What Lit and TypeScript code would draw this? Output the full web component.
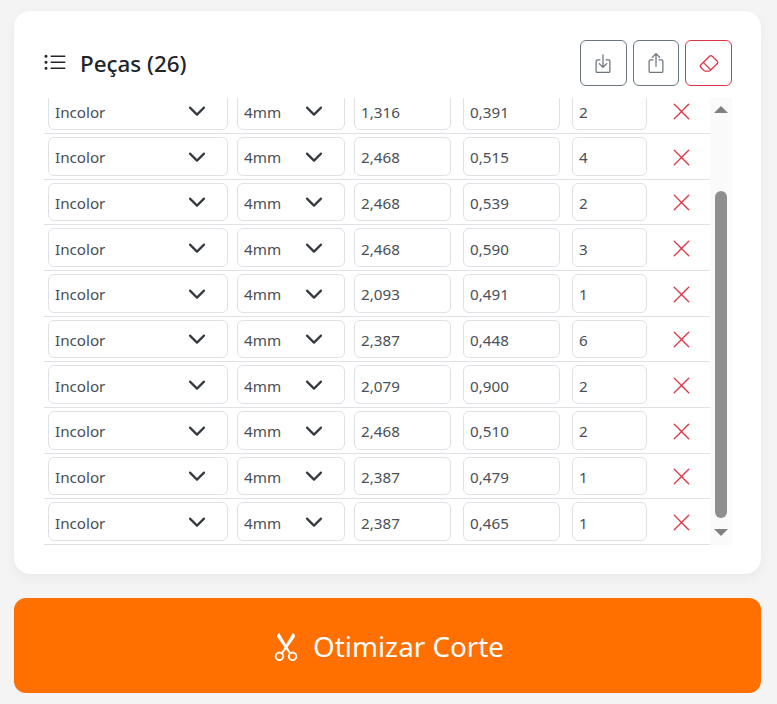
import { LitElement, html, css, svg } from "lit";
import { customElement } from "lit/decorators.js";

const rows = [
  ["1,316", "0,391", "2"],
  ["2,468", "0,515", "4"],
  ["2,468", "0,539", "2"],
  ["2,468", "0,590", "3"],
  ["2,093", "0,491", "1"],
  ["2,387", "0,448", "6"],
  ["2,079", "0,900", "2"],
  ["2,468", "0,510", "2"],
  ["2,387", "0,479", "1"],
  ["2,387", "0,465", "1"],
];

const icon = (cls: string, d: string) => html`<svg class=${cls} viewBox="0 0 16 16" fill="currentColor" aria-hidden="true">${svg`<path fill-rule="evenodd" d=${d}></path>`}</svg>`;

const BOX = "M3.5 6a.5.5 0 0 0-.5.5v8a.5.5 0 0 0 .5.5h9a.5.5 0 0 0 .5-.5v-8a.5.5 0 0 0-.5-.5h-2a.5.5 0 0 1 0-1h2A1.5 1.5 0 0 1 14 6.5v8a1.5 1.5 0 0 1-1.5 1.5h-9A1.5 1.5 0 0 1 2 14.5v-8A1.5 1.5 0 0 1 3.5 5h2a.5.5 0 0 1 0 1h-2z";
const LIST = "M5 11.5a.5.5 0 0 1 .5-.5h9a.5.5 0 0 1 0 1h-9a.5.5 0 0 1-.5-.5zm0-4a.5.5 0 0 1 .5-.5h9a.5.5 0 0 1 0 1h-9a.5.5 0 0 1-.5-.5zm0-4a.5.5 0 0 1 .5-.5h9a.5.5 0 0 1 0 1h-9a.5.5 0 0 1-.5-.5zm-3 1a1 1 0 1 0 0-2 1 1 0 0 0 0 2zm0 4a1 1 0 1 0 0-2 1 1 0 0 0 0 2zm0 4a1 1 0 1 0 0-2 1 1 0 0 0 0 2z";
const IN = BOX + "M7.646 11.854a.5.5 0 0 0 .708 0l3-3a.5.5 0 0 0-.708-.708L8.5 10.293V1.5a.5.5 0 0 0-1 0v8.793L5.354 8.146a.5.5 0 1 0-.708.708l3 3z";
const UP = BOX + "M7.646.146a.5.5 0 0 1 .708 0l3 3a.5.5 0 0 1-.708.708L8.5 1.707V10.5a.5.5 0 0 1-1 0V1.707L5.354 3.854a.5.5 0 1 1-.708-.708l3-3z";
const ERASER = "M8.086 2.207a2 2 0 0 1 2.828 0l3.879 3.879a2 2 0 0 1 0 2.828l-5.5 5.5A2 2 0 0 1 7.879 15H5.12a2 2 0 0 1-1.414-.586l-2.5-2.5a2 2 0 0 1 0-2.828l6.879-6.879zm2.121.707a1 1 0 0 0-1.414 0L4.16 7.547l5.293 5.293 4.633-4.633a1 1 0 0 0 0-1.414l-3.879-3.879zM8.746 13.547 3.453 8.254 1.914 9.793a1 1 0 0 0 0 1.414l2.5 2.5a1 1 0 0 0 .707.293H7.88a1 1 0 0 0 .707-.293l.16-.16z";
const X = "M2.146 2.854a.5.5 0 1 1 .708-.708L8 7.293l5.146-5.147a.5.5 0 0 1 .708.708L8.707 8l5.147 5.146a.5.5 0 0 1-.708.708L8 8.707l-5.146 5.147a.5.5 0 0 1-.708-.708L7.293 8 2.146 2.854Z";
const SCISSORS = "M3.5 3.5c-.614-.884-.074-1.962.858-2.5L8 7.226 11.642 1c.932.538 1.472 1.616.858 2.5L8.81 8.61l1.556 2.661a2.5 2.5 0 1 1-.794.637L8 9.73l-1.572 2.177a2.5 2.5 0 1 1-.794-.637L7.19 8.61 3.5 3.5zm2.5 10a1.5 1.5 0 1 0-3 0 1.5 1.5 0 0 0 3 0zm7 0a1.5 1.5 0 1 0-3 0 1.5 1.5 0 0 0 3 0z";

const chevron = html`<svg class="chev" viewBox="0 0 18 11" fill="none" stroke="#343a40" stroke-width="2.2" stroke-linecap="round" stroke-linejoin="round" aria-hidden="true"><path d="M2 1.6l7 7 7-7"></path></svg>`;

@customElement("app-root")
export class AppRoot extends LitElement {
  static styles = css`
    :host {
      display: block;
      box-sizing: border-box;
      min-height: 704px;
      padding: 11px 16px 11px 14px;
      background: #f4f4f4;
      font-family: "Noto Sans", "Open Sans", sans-serif;
      color: #212529;
    }
    .card {
      background: #fff;
      border-radius: 16px;
      padding: 29px 29px 29px 30px;
      box-shadow: 0 4px 12px rgba(0, 0, 0, 0.05);
    }
    .head {
      display: flex;
      align-items: center;
      justify-content: space-between;
      height: 46px;
      margin-bottom: 12px;
    }
    .title {
      display: flex;
      align-items: center;
      gap: 13px;
    }
    .i-list {
      width: 24px;
      height: 24px;
      margin-left: -1px;
    }
    h2 {
      margin: 2px 0 0;
      font-size: 22.4px;
      font-weight: 500;
      line-height: 30px;
      color: #212529;
    }
    .tools {
      display: flex;
      gap: 6px;
    }
    .tool {
      box-sizing: border-box;
      width: 46.67px;
      height: 46px;
      display: flex;
      align-items: center;
      justify-content: center;
      border: 1px solid #6c757d;
      border-radius: 6px;
      color: #6c757d;
    }
    .tool.danger {
      border-color: #dc3545;
      color: #dc3545;
    }
    .i-tool {
      width: 20px;
      height: 20px;
    }
    .body {
      display: flex;
      height: 447px;
      overflow: hidden;
    }
    .list {
      flex: 1;
      min-width: 0;
    }
    .rows {
      margin-top: -9.7px;
    }
    .row {
      box-sizing: border-box;
      height: 45.67px;
      padding: 3px 0 3px 4px;
      border-bottom: 1px solid #dee2e6;
      display: grid;
      grid-template-columns: 189px 117px 109px 109px 75px 1fr;
    }
    .field {
      box-sizing: border-box;
      height: 38.67px;
      display: flex;
      align-items: center;
      justify-content: space-between;
      padding: 2px 6px 0;
      border: 1px solid #dee2e6;
      border-radius: 6px;
      background: #fff;
      font-size: 15.2px;
      color: #495057;
    }
    .w1 { width: 180px; padding-right: 21px; }
    .w2 { width: 108px; padding-right: 21px; }
    .w3 { width: 97px; }
    .w4 { width: 75px; }
    .chev {
      width: 18px;
      height: 11px;
      margin-top: 0;
    }
    .del {
      display: flex;
      align-items: center;
      justify-content: center;
      padding: 2px 0 0 5px;
      color: #dc3545;
    }
    .i-x {
      width: 21px;
      height: 21px;
    }
    .bar {
      flex: none;
      width: 22px;
      height: 447px;
      background: #fafafa;
      display: flex;
      flex-direction: column;
      align-items: center;
    }
    .arrow {
      width: 0;
      height: 0;
      border-left: 7px solid transparent;
      border-right: 7px solid transparent;
    }
    .arrow.up {
      margin-top: 8px;
      border-bottom: 7px solid #808080;
    }
    .arrow.down {
      margin-top: 11px;
      border-top: 7px solid #808080;
    }
    .thumb {
      width: 12px;
      height: 327px;
      margin-top: 78px;
      background: #8f8f8f;
      border-radius: 6px;
    }
    .go {
      margin-top: 24px;
      height: 95px;
      border-radius: 12px;
      background: #ff7000;
      color: #fff;
      display: flex;
      align-items: center;
      justify-content: center;
      gap: 12px;
      font-size: 27.8px;
    }
    .i-go {
      width: 30px;
      height: 30px;
    }
  `;

  render() {
    return html`
      <section class="card">
        <header class="head">
          <div class="title">
            ${icon("i-list", LIST)}
            <h2>Peças (26)</h2>
          </div>
          <div class="tools">
            <div class="tool">${icon("i-tool", IN)}</div>
            <div class="tool">${icon("i-tool", UP)}</div>
            <div class="tool danger">${icon("i-tool", ERASER)}</div>
          </div>
        </header>
        <div class="body">
          <div class="list">
            <div class="rows">
              ${rows.map(
                ([a, b, c]) => html`
                  <div class="row">
                    <div class="field w1"><span>Incolor</span>${chevron}</div>
                    <div class="field w2"><span>4mm</span>${chevron}</div>
                    <div class="field w3">${a}</div>
                    <div class="field w3">${b}</div>
                    <div class="field w4">${c}</div>
                    <div class="del">${icon("i-x", X)}</div>
                  </div>
                `
              )}
            </div>
          </div>
          <div class="bar">
            <div class="arrow up"></div>
            <div class="thumb"></div>
            <div class="arrow down"></div>
          </div>
        </div>
      </section>
      <div class="go">${icon("i-go", SCISSORS)}<span>Otimizar Corte</span></div>
    `;
  }
}
